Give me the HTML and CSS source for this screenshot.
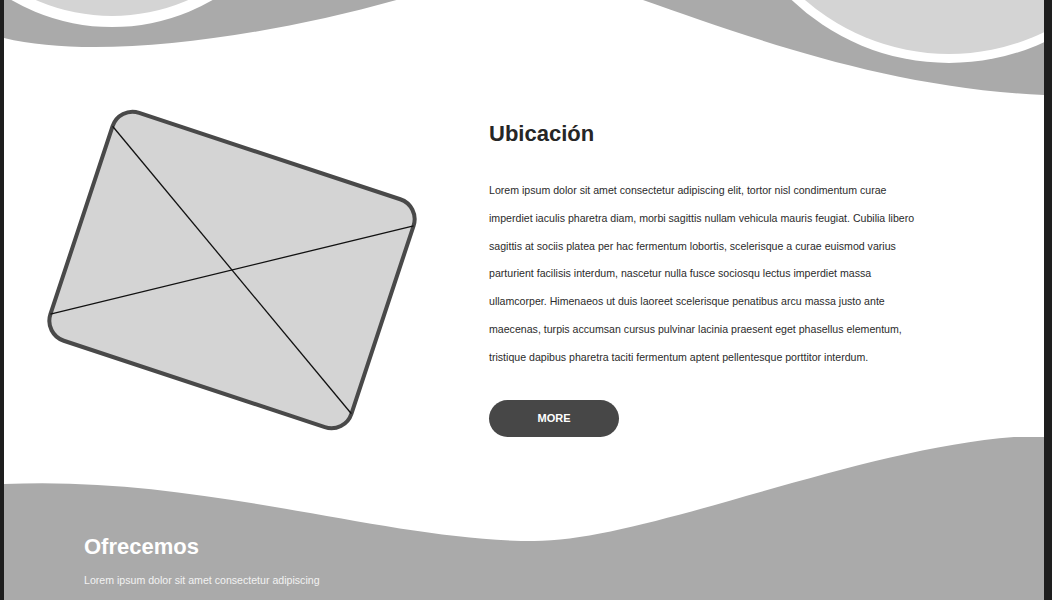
FILE: index.html
```html
<!DOCTYPE html>
<html lang="es">
<head>
<meta charset="utf-8">
<title>Ubicación</title>
<link rel="stylesheet" href="styles.css">
</head>
<body>
<div class="page">
  <svg class="top-wave" viewBox="0 0 1040 100" width="1040" height="100" aria-hidden="true">
    <path d="M0,-60 L0,38 C90,60 250,40 396,-1 C470,-18 560,-22 639,0 C740,35 880,88 1040,95 L1040,-60 Z" fill="#aaaaaa"/>
    <circle cx="108" cy="-174" r="201" fill="#ffffff"/>
    <circle cx="108" cy="-174" r="190" fill="#d4d4d4"/>
    <circle cx="945" cy="-165" r="228" fill="#ffffff"/>
    <circle cx="945" cy="-165" r="219" fill="#d4d4d4"/>
  </svg>

  <section class="about">
    <div class="media">
      <svg viewBox="0 0 380 330" width="380" height="330" aria-hidden="true">
        <g transform="translate(190 165) rotate(18.3)">
          <rect x="-158.5" y="-120" width="317" height="240" rx="21" ry="21" fill="#d4d4d4" stroke="#494949" stroke-width="4"/>
          <line x1="-158.5" y1="-99" x2="158.5" y2="99" stroke="#111" stroke-width="1.3"/>
          <line x1="158.5" y1="-99" x2="-158.5" y2="99" stroke="#111" stroke-width="1.3"/>
        </g>
      </svg>
    </div>
    <div class="content">
      <h2 class="title">Ubicación</h2>
      <p class="text">Lorem ipsum dolor sit amet consectetur adipiscing elit, tortor nisl condimentum curae imperdiet iaculis pharetra diam, morbi sagittis nullam vehicula mauris feugiat. Cubilia libero sagittis at sociis platea per hac fermentum lobortis, scelerisque a curae euismod varius parturient facilisis interdum, nascetur nulla fusce sociosqu lectus imperdiet massa ullamcorper. Himenaeos ut duis laoreet scelerisque penatibus arcu massa justo ante maecenas, turpis accumsan cursus pulvinar lacinia praesent eget phasellus elementum, tristique dapibus pharetra taciti fermentum aptent pellentesque porttitor interdum.</p>
      <a class="btn" href="#">MORE</a>
    </div>
  </section>

  <section class="offer">
    <svg class="offer-wave" viewBox="0 0 1040 110" width="1040" height="110" aria-hidden="true">
      <path d="M0,0 L0,47 C200,38 380,104 530,104 C640,104 850,12 1010,0 L1040,0 Z" fill="#ffffff"/>
    </svg>
    <div class="offer-inner">
      <h2 class="offer-title">Ofrecemos</h2>
      <p class="offer-text">Lorem ipsum dolor sit amet consectetur adipiscing</p>
    </div>
  </section>
</div>
</body>
</html>
```

FILE: styles.css
```css
* {
  box-sizing: border-box;
}

html, body {
  margin: 0;
  padding: 0;
}

body {
  background: #1e1e1e;
  font-family: "Liberation Sans", Arial, sans-serif;
  height: 600px;
  overflow: hidden;
}

.page {
  margin-left: 4px;
  width: 1040px;
  height: 600px;
  background: #ffffff;
  overflow: hidden;
  display: flex;
  flex-direction: column;
}

.top-wave {
  display: block;
  flex: none;
}

.about {
  display: flex;
  height: 337px;
  flex: none;
}

.media {
  width: 485px;
  padding: 5px 0 0 38px;
  flex: none;
}

.media svg {
  display: block;
}

.content {
  width: 435px;
  padding-top: 21px;
}

.title {
  margin: 0;
  font-size: 22px;
  line-height: 26px;
  font-weight: 700;
  color: #262626;
}

.text {
  margin: 30px 0 0;
  font-size: 10.6px;
  line-height: 27.8px;
  color: #2b2b2b;
}

.btn {
  margin-top: 28px;
  display: flex;
  align-items: center;
  justify-content: center;
  width: 130px;
  height: 37px;
  border-radius: 19px;
  background: #474747;
  color: #ffffff;
  font-size: 11px;
  font-weight: 700;
  text-decoration: none;
}

.offer {
  position: relative;
  flex: 1;
  background: #aaaaaa;
}

.offer-wave {
  position: absolute;
  top: 0;
  left: 0;
  display: block;
}

.offer-inner {
  position: relative;
  padding: 97px 0 0 80px;
}

.offer-title {
  margin: 0;
  font-size: 22px;
  line-height: 26px;
  font-weight: 700;
  color: #ffffff;
}

.offer-text {
  margin: 12px 0 0;
  font-size: 10.6px;
  line-height: 16px;
  color: #f2f2f2;
}
```
